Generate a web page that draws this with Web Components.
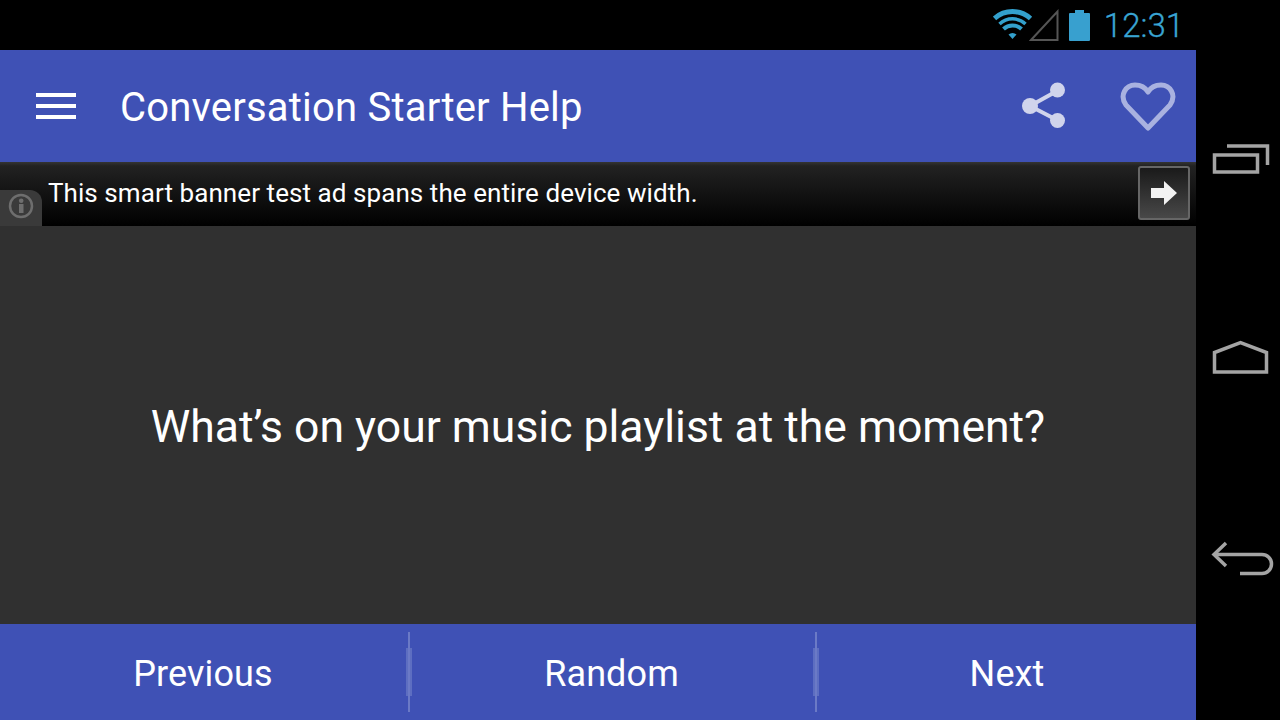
<!DOCTYPE html>
<html>
<head>
<meta charset="utf-8">
<title>Conversation Starter Help</title>
<style>
  html, body { margin: 0; height: 100%; background: #000; font-family: Roboto, sans-serif; overflow: hidden; }
</style>
</head>
<body>
<device-shell>
  <status-bar></status-bar>
  <app-bar title="Conversation Starter Help"></app-bar>
  <ad-banner text="This smart banner test ad spans the entire device width."></ad-banner>
  <question-view>What’s on your music playlist at the moment?</question-view>
  <button-bar>
    <bar-button style="padding-right: 2px">Previous</bar-button>
    <bar-button divider>Random</bar-button>
    <bar-button divider style="padding-left: 3px">Next</bar-button>
  </button-bar>
</device-shell>

<script>
class DeviceShell extends HTMLElement {
  constructor() {
    super();
    this.attachShadow({mode: 'open'}).innerHTML = `
      <style>
        :host { display: flex; width: 1280px; height: 720px; background: #000; }
        .screen { width: 1196px; height: 720px; display: flex; flex-direction: column; }
        .nav { width: 84px; height: 720px; display: grid; grid-template-rows: repeat(3, 200px); align-content: center; justify-items: center; align-items: center; }
        svg { display: block; fill: none; stroke: #a4a4a4; stroke-width: 3.500; }
      </style>
      <div class="screen"><slot></slot></div>
      <div class="nav">
        <svg width="84" height="60" viewBox="0 0 84 60"><path d="M18.500 25h43v17h-43z"/><path d="M31 16h40.500v19"/></svg>
        <svg width="84" height="60" viewBox="0 0 84 60"><path d="M18.500 42V22.500L44.500 12.500 70.500 22.500V42z"/></svg>
        <svg width="84" height="60" viewBox="0 0 84 60"><path d="M18 24.500h48a9.500 9.500 0 0 1 0 19H44"/><path d="M30 13 18 24.500 30 36"/></svg>
      </div>
    `;
  }
}

class StatusBar extends HTMLElement {
  constructor() {
    super();
    this.attachShadow({mode: 'open'}).innerHTML = `
      <style>
        :host { display: flex; height: 50px; background: #000; align-items: center; justify-content: flex-end; padding-right: 12px; box-sizing: border-box; }
        svg { display: block; }
        .clock { font: 300 33px Roboto, sans-serif; -webkit-text-stroke: 0.3px #39a5d3; color: #39a5d3; margin: 2px 0 0 14px; line-height: 50px; }
        .wifi { margin-right: -4px; }
        .batt { margin-left: 10px; }
      </style>
      <svg class="wifi" width="40" height="32" viewBox="0 0 40 32" fill="none" stroke="#33a0cc">
        <path d="M19.500 30 15.500 25.500a6 6 0 0 1 8 0z" fill="#33a0cc" stroke="none"/>
        <path d="M10.500 20a13 13 0 0 1 18 0" stroke-width="4"/>
        <path d="M6.500 15a19 19 0 0 1 26 0" stroke-width="3.500"/>
        <path d="M1.500 9.500a27 27 0 0 1 36 0" stroke-width="5"/>
      </svg>
      <svg width="30" height="32" viewBox="0 0 30 32"><path d="M2 31 28.500 2.500V31z" fill="none" stroke="#555" stroke-width="2"/></svg>
      <svg class="batt" width="21" height="32" viewBox="0 0 21 32"><path d="M6 1h9v3h5a1 1 0 0 1 1 1v26a1 1 0 0 1-1 1H1a1 1 0 0 1-1-1V5a1 1 0 0 1 1-1h5z" fill="#38a0cf"/></svg>
      <span class="clock">12:31</span>
    `;
  }
}

class AppBar extends HTMLElement {
  constructor() {
    super();
    this.attachShadow({mode: 'open'}).innerHTML = `
      <style>
        :host { display: flex; height: 112px; background: #3f51b5; align-items: center; color: #fff; box-sizing: border-box; padding-left: 36px; }
        .menu { width: 40px; display: flex; flex-direction: column; gap: 7px; }
        .menu i { display: block; height: 4px; background: #fff; }
        h1 { flex: 1; margin: 2px 0 0 44px; font: 400 40px Roboto, sans-serif; letter-spacing: 0.2px; }
        svg { display: block; }
        .share { margin-right: 52px; }
        .heart { margin: 1px 20px 0 0; }
      </style>
      <div class="menu"><i></i><i></i><i></i></div>
      <h1></h1>
      <svg class="share" width="48" height="50" viewBox="0 0 48 50" fill="#d0d4ec" stroke="#d0d4ec" stroke-width="4">
        <path d="M37 10 10 25 37 39" fill="none"/>
        <circle cx="37.500" cy="9" r="7.500" stroke="none"/>
        <circle cx="10" cy="25" r="8" stroke="none"/>
        <circle cx="37.500" cy="39.500" r="7.500" stroke="none"/>
      </svg>
      <svg class="heart" width="56" height="52" viewBox="0 0 56 52">
        <path d="M28 47 6 24C-1 14 6 4 15 4c6 0 10 2 13 7 3-5 7-7 13-7 9 0 16 10 9 20z" fill="none" stroke="#a9b2e0" stroke-width="5" stroke-linejoin="round"/>
      </svg>
    `;
    this.shadowRoot.querySelector('h1').textContent = this.getAttribute('title');
  }
}

class AdBanner extends HTMLElement {
  constructor() {
    super();
    this.attachShadow({mode: 'open'}).innerHTML = `
      <style>
        :host { display: block; position: relative; height: 64px; box-sizing: border-box; background: linear-gradient(#343434 0, #222 6%, #000 100%); color: #fff; }
        .row { display: flex; height: 62px; align-items: flex-start; }
        .txt { font: 400 26px Roboto, sans-serif; margin: 15px 0 0 48px; flex: 1; line-height: 32px; white-space: nowrap; letter-spacing: 0.07px; }
        .go { box-sizing: border-box; width: 52px; height: 54px; margin: 4px 6px 0 0; border: 2px solid #666; border-radius: 3px; background: linear-gradient(#1a1a1a, #484848); display: flex; align-items: center; justify-content: center; }
        .info { position: absolute; left: 0; top: 28px; width: 42px; height: 36px; background: #3a3a3a; border-top-right-radius: 12px; display: flex; align-items: flex-start; justify-content: center; padding-top: 3px; box-sizing: border-box; }
        .go svg, .info svg { display: block; }
      </style>
      <div class="row">
        <span class="txt"></span>
        <div class="go"><svg width="28" height="26" viewBox="0 0 28 26"><path d="M1 8h13V1l13 12-13 12v-7H1z" fill="#f2f2f2"/></svg></div>
      </div>
      <div class="info"><svg width="26" height="26" viewBox="0 0 26 26"><circle cx="13" cy="13" r="11" fill="none" stroke="#6e6e6e" stroke-width="2.500"/><rect x="11" y="11" width="4.500" height="9" fill="#6e6e6e"/><circle cx="13.200" cy="7.800" r="2.300" fill="#6e6e6e"/></svg></div>
    `;
    this.shadowRoot.querySelector('.txt').textContent = this.getAttribute('text');
  }
}

class QuestionView extends HTMLElement {
  constructor() {
    super();
    this.attachShadow({mode: 'open'}).innerHTML = `
      <style>
        :host { display: flex; flex: 1; background: #303030; color: #fff; align-items: center; justify-content: center; font: 400 44.500px Roboto, sans-serif; text-align: center; padding-top: 4px; }
      </style>
      <slot></slot>
    `;
  }
}

class ButtonBar extends HTMLElement {
  constructor() {
    super();
    this.attachShadow({mode: 'open'}).innerHTML = `
      <style>
        :host { display: grid; grid-template-columns: 408px 407px 381px; height: 96px; background: #3f51b5; }
      </style>
      <slot></slot>
    `;
  }
}

class BarButton extends HTMLElement {
  constructor() {
    super();
    this.attachShadow({mode: 'open'}).innerHTML = `
      <style>
        :host { display: flex; position: relative; align-items: center; justify-content: center; color: #fff; font: 400 36px Roboto, sans-serif; letter-spacing: 0.1px; padding-top: 4px; box-sizing: border-box; }
        .line, .glow { display: none; position: absolute; }
        :host([divider]) .line { display: block; left: 0; top: 8px; width: 2px; height: 80px; background: #6b7ac6; }
        :host([divider]) .glow { display: block; left: -2px; top: 24px; width: 6px; height: 48px; background: rgba(107, 122, 198, 0.7); }
      </style>
      <span class="glow"></span><span class="line"></span>
      <slot></slot>
    `;
  }
}

customElements.define('device-shell', DeviceShell);
customElements.define('status-bar', StatusBar);
customElements.define('app-bar', AppBar);
customElements.define('ad-banner', AdBanner);
customElements.define('question-view', QuestionView);
customElements.define('button-bar', ButtonBar);
customElements.define('bar-button', BarButton);
</script>
</body>
</html>
